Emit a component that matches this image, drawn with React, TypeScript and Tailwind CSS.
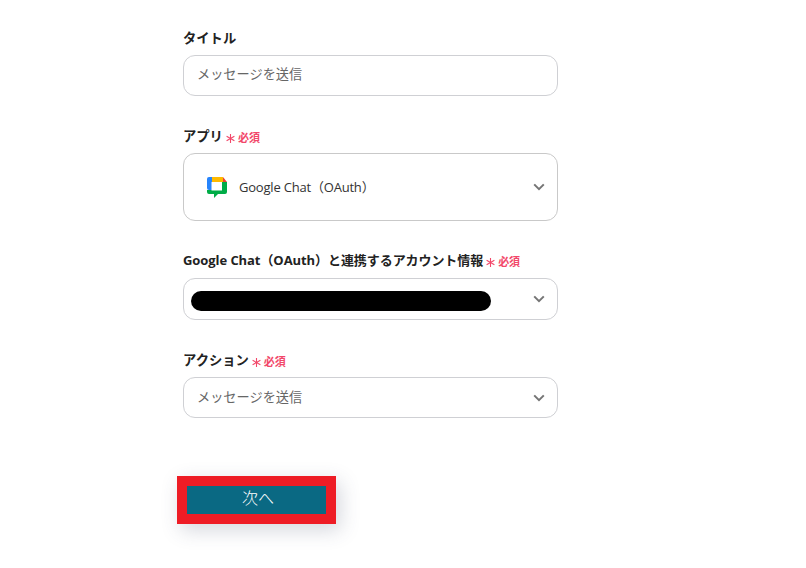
import React from "react";

const Chevron = () => (
  <svg width="12" height="8" viewBox="0 0 12 8" fill="none" className="shrink-0">
    <path d="M1.2 1.4 6 6.2l4.8-4.8" stroke="#757575" strokeWidth="2" />
  </svg>
);

const Required = () => (
  <span className="ml-[3px] flex items-center text-[11px] font-bold leading-none text-[#f2486a]">
    <svg width="9" height="9" viewBox="0 0 9 9" className="mr-[3px] mt-[3px]" stroke="#f2486a" strokeWidth="1.1">
      <path d="M4.5 0v9M.6 2.2l7.8 4.6M8.4 2.2.6 6.8" />
    </svg>
    必須
  </span>
);

const ChatLogo = () => (
  <svg width="22" height="22" viewBox="0 0 22 22">
    <path d="M1 3a2 2 0 0 1 2-2h3v5H1z" fill="#2684fc" />
    <path d="M1 6h5v8H3a2 2 0 0 1-2-2z" fill="#2684fc" />
    <path d="M6 1h11v5H6z" fill="#ffba00" />
    <path d="M17 1l4 5h-4z" fill="#ea4335" />
    <path d="M16 6h5v10a2 2 0 0 1-2 2h-7l-4 4v-4H3a2 2 0 0 1-2-2v-2h15z" fill="#00ac47" />
    <path d="M5.500 6H16v8.500H5.500z" fill="#fff" />
  </svg>
);

const App = () => {
  return (
    <div
      className="h-[568px] w-[806px] overflow-hidden bg-white text-[#222]"
      style={{ fontFamily: '"Open Sans", "Noto Sans CJK JP", sans-serif' }}
    >
      <div className="ml-[183px] flex w-[375px] flex-col pt-[28px]">
        <label className="flex h-[20px] items-center pt-[2px] text-[13.3px] font-bold">タイトル</label>
        <div className="mt-[7px] flex h-[41px] items-center rounded-[12px] border border-[#cfd0d4] px-[13px] pb-[1px] text-[13.2px] text-[#666]">
          メッセージを送信
        </div>

        <label className="mt-[31px] flex h-[20px] items-center text-[13.3px] font-bold">
          アプリ
          <Required />
        </label>
        <div className="mt-[6px] flex h-[68px] items-center rounded-[12px] border border-[#c9c9c9] pl-[22px] pr-[12.5px]">
          <ChatLogo />
          <span className="ml-[11px] flex-1 pt-[2px] text-[13px] tracking-[-0.2px] text-[#333]">Google Chat（OAuth）</span>
          <Chevron />
        </div>

        <label className="mt-[30px] flex h-[20px] items-center text-[13px] font-bold tracking-[-0.07px]">
          Google Chat（OAuth）と連携するアカウント情報
          <Required />
        </label>
        <div className="mt-[7px] flex h-[42px] items-center justify-between rounded-[12px] border border-[#cfd0d4] pl-[7px] pr-[12.5px]">
          <div className="mt-[4px] h-[20px] w-[300px] rounded-[10px] bg-black" />
          <Chevron />
        </div>

        <label className="mt-[30px] flex h-[20px] items-center pt-[2px] text-[13.3px] font-bold">
          アクション
          <Required />
        </label>
        <div className="mt-[7px] flex h-[41px] items-center justify-between rounded-[12px] border border-[#cfd0d4] pl-[13px] pr-[12.5px] text-[13.2px] text-[#666]">
          <span className="pt-[1px]">メッセージを送信</span>
          <Chevron />
        </div>

        <button className="-ml-[6px] mt-[58px] h-[48px] w-[159px] border-[10px] border-[#ee1c25] bg-[#0a6983] pb-[4px] pl-[3px] text-[16px] font-light text-white shadow-[4px_6px_20px_rgba(60,70,100,0.22)]">
          次へ
        </button>
      </div>
    </div>
  );
};

export default App;
